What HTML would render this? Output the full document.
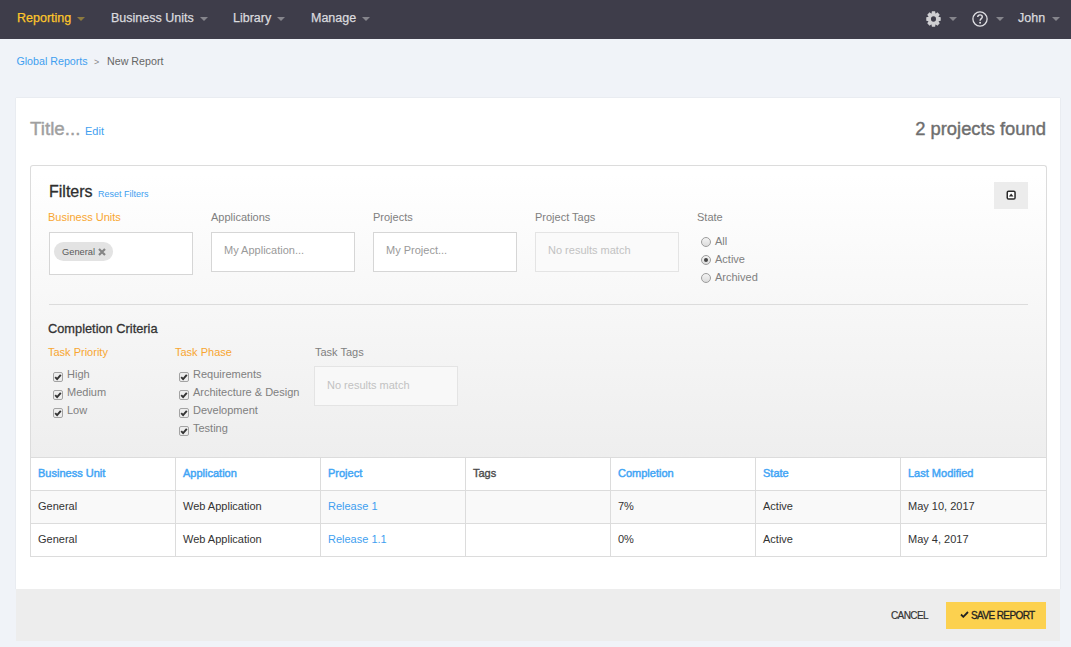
<!DOCTYPE html>
<html><head><meta charset="utf-8">
<style>
*{margin:0;padding:0;box-sizing:border-box}
html,body{width:1071px;height:647px;overflow:hidden;background:#f0f3f8;font-family:"Liberation Sans",sans-serif;position:relative}
.a{position:absolute}
.t{position:absolute;white-space:nowrap;line-height:1}
#nav{left:0;top:0;width:1071px;height:39px;background:#3e3d4a}
.nv{font-size:12.5px;color:#dadade;-webkit-text-stroke:.25px}
.car{position:absolute;width:0;height:0;border-left:4px solid transparent;border-right:4px solid transparent;border-top:4px solid #85858c}
#card{left:16px;top:98px;width:1044px;height:491px;background:#fff;box-shadow:0 0 1px rgba(0,0,0,.18)}
#foot{left:16px;top:589px;width:1044px;height:52px;background:#ededed}
#filt{left:30px;top:165px;width:1017px;height:293px;border:1px solid #dcdcdc;border-bottom:none;border-radius:3px 3px 0 0;background:linear-gradient(#fff 0,#fff 8px,#eeeeee 100%)}
.lbl{font-size:11px;color:#808080}
.org{color:#f8a631}
.m{-webkit-text-stroke:.35px}
.inp{position:absolute;background:#fff;border:1px solid #d6d6d6;width:144px;height:40px}
.ph{font-size:11px;color:#9a9a9a}
.blue{color:#3f9ff0}
.rad{position:absolute;width:10px;height:10px;border-radius:50%;border:1px solid #9d9d9d;background:linear-gradient(#f3f3f3,#dcdcdc)}
.chk{position:absolute;width:10px;height:10px;border-radius:2px;border:1px solid #a0a0a0;background:#f0f0f0}
.chk svg{position:absolute;left:0;top:0}
table{position:absolute;left:30px;top:457px;width:1017px;border-collapse:collapse;table-layout:fixed}
td,th{border:1px solid #dcdcdc;height:33px;font-size:11px;text-align:left;padding:0 7px;color:#333;font-weight:normal;white-space:nowrap}
th{color:#42a5f5;font-weight:normal;-webkit-text-stroke:.45px;padding-bottom:2px}
td{padding-bottom:2px}
tr.s td{background:#f9f9f9}
</style></head><body>
<div id="nav" class="a">
  <div class="t nv" style="left:17px;top:12px;color:#fdc52a">Reporting</div><div class="car" style="left:77px;top:17px;border-top-color:#8c7a3e"></div>
  <div class="t nv" style="left:111px;top:12px">Business Units</div><div class="car" style="left:200px;top:17px"></div>
  <div class="t nv" style="left:233px;top:12px">Library</div><div class="car" style="left:277px;top:17px"></div>
  <div class="t nv" style="left:311px;top:12px">Manage</div><div class="car" style="left:362px;top:17px"></div>
  <svg class="a" style="left:925.5px;top:11px" width="15" height="16" viewBox="0 0 16 16" preserveAspectRatio="none"><path fill="#cfcfd2" d="M5.80 2.85 L6.30 0.29 L9.70 0.29 L10.20 2.85 L10.09 2.80 L12.25 1.34 L14.66 3.75 L13.20 5.91 L13.15 5.80 L15.71 6.30 L15.71 9.70 L13.15 10.20 L13.20 10.09 L14.66 12.25 L12.25 14.66 L10.09 13.20 L10.20 13.15 L9.70 15.71 L6.30 15.71 L5.80 13.15 L5.91 13.20 L3.75 14.66 L1.34 12.25 L2.80 10.09 L2.85 10.20 L0.29 9.70 L0.29 6.30 L2.85 5.80 L2.80 5.91 L1.34 3.75 L3.75 1.34 L5.91 2.80Z"/><circle cx="8" cy="8" r="2.7" fill="#3e3d4a"/></svg>
  <div class="car" style="left:949px;top:17px"></div>
  <svg class="a" style="left:972px;top:11px" width="16" height="16" viewBox="0 0 16 16"><circle cx="8" cy="8" r="7.1" fill="none" stroke="#e0e0e4" stroke-width="1.3"/><path d="M5.7 6.1C5.7 4.7 6.7 3.9 8 3.9C9.3 3.9 10.3 4.8 10.3 6C10.3 7.5 8.1 7.8 8.1 9.7" fill="none" stroke="#e0e0e4" stroke-width="1.4"/><circle cx="8.1" cy="11.8" r=".95" fill="#e0e0e4"/></svg>
  <div class="car" style="left:996px;top:17px"></div>
  <div class="t nv" style="left:1018px;top:12px">John</div><div class="car" style="left:1052px;top:17px"></div>
</div>

<div class="t blue" style="left:16.4px;top:56px;font-size:10.7px">Global Reports</div>
<div class="t" style="left:94px;top:58px;font-size:9px;color:#888">&gt;</div>
<div class="t" style="left:107px;top:56px;font-size:10.7px;color:#666">New Report</div>

<div id="card" class="a"></div>
<div id="foot" class="a"></div>

<div class="t m" style="left:30px;top:119.5px;font-size:18.8px;color:#a0a0a0;-webkit-text-stroke:.4px">Title...</div>
<div class="t blue" style="left:85px;top:126px;font-size:11px">Edit</div>
<div class="t m" style="right:25px;top:119.5px;font-size:18.4px;color:#6e6e6e;-webkit-text-stroke:.4px">2 projects found</div>

<div id="filt" class="a"></div>
<div class="t m" style="left:49px;top:184px;font-size:16px;color:#2e2e2e;-webkit-text-stroke:.3px">Filters</div>
<div class="t blue" style="left:98px;top:190px;font-size:9px">Reset Filters</div>
<div class="a" style="left:994px;top:182px;width:34px;height:27px;background:#ececec"></div>
<svg class="a" style="left:1005.8px;top:189.8px" width="10" height="10" viewBox="0 0 10 10"><rect x="1.25" y="1.25" width="7.8" height="7.8" rx="1.3" fill="#fff" stroke="#2a2a2a" stroke-width="1.5"/><path d="M2.8 6.5L5.15 3.4L7.5 6.5Z" fill="#2a2a2a"/></svg>

<div class="t lbl org" style="left:48px;top:212px">Business Units</div>
<div class="t lbl" style="left:211px;top:212px">Applications</div>
<div class="t lbl" style="left:373px;top:212px">Projects</div>
<div class="t lbl" style="left:535px;top:212px">Project Tags</div>
<div class="t lbl" style="left:697px;top:212px">State</div>

<div class="inp" style="left:49px;top:232px;height:43px"></div>
<div class="a" style="left:54px;top:242px;width:59px;height:19px;border-radius:10px;background:#e3e3e3"></div>
<div class="t" style="left:62px;top:247.6px;font-size:9.3px;color:#5a5a5a">General</div>
<svg class="a" style="left:98px;top:248px" width="8" height="8" viewBox="0 0 8 8"><path d="M1 1L7 7M7 1L1 7" stroke="#858585" stroke-width="2.2"/></svg>

<div class="inp" style="left:211px;top:232px"></div>
<div class="t ph" style="left:224px;top:245px">My Application...</div>
<div class="inp" style="left:373px;top:232px"></div>
<div class="t ph" style="left:386px;top:245px">My Project...</div>
<div class="inp" style="left:535px;top:232px;background:#fafafa;border-color:#e4e4e4"></div>
<div class="t ph" style="left:548px;top:245px;color:#c2c2c2">No results match</div>

<div class="rad" style="left:701px;top:237px"></div>
<div class="t lbl" style="left:715px;top:236px">All</div>
<div class="rad" style="left:701px;top:255px"></div>
<div class="a" style="left:704px;top:258px;width:4px;height:4px;border-radius:50%;background:#444"></div>
<div class="t lbl" style="left:715px;top:254px">Active</div>
<div class="rad" style="left:701px;top:273px"></div>
<div class="t lbl" style="left:715px;top:272px">Archived</div>

<div class="a" style="left:49px;top:304px;width:979px;height:1px;background:#dcdcdc"></div>

<div class="t" style="left:48px;top:323px;font-size:12.8px;color:#333;-webkit-text-stroke:.3px">Completion Criteria</div>
<div class="t lbl org" style="left:48px;top:347px">Task Priority</div>
<div class="t lbl org" style="left:175px;top:347px">Task Phase</div>
<div class="t lbl" style="left:315px;top:347px">Task Tags</div>

<svg class="a" style="left:53px;top:372px" width="10" height="10" viewBox="0 0 10 10"><rect x=".5" y=".5" width="9" height="9" rx="1.5" fill="#ededed" stroke="#a3a3a3"/><path d="M2.2 5.2L4.1 7.2L7.8 2.8" fill="none" stroke="#333" stroke-width="1.9"/></svg><svg class="a" style="left:53px;top:390px" width="10" height="10" viewBox="0 0 10 10"><rect x=".5" y=".5" width="9" height="9" rx="1.5" fill="#ededed" stroke="#a3a3a3"/><path d="M2.2 5.2L4.1 7.2L7.8 2.8" fill="none" stroke="#333" stroke-width="1.9"/></svg><svg class="a" style="left:53px;top:408px" width="10" height="10" viewBox="0 0 10 10"><rect x=".5" y=".5" width="9" height="9" rx="1.5" fill="#ededed" stroke="#a3a3a3"/><path d="M2.2 5.2L4.1 7.2L7.8 2.8" fill="none" stroke="#333" stroke-width="1.9"/></svg><svg class="a" style="left:179px;top:372px" width="10" height="10" viewBox="0 0 10 10"><rect x=".5" y=".5" width="9" height="9" rx="1.5" fill="#ededed" stroke="#a3a3a3"/><path d="M2.2 5.2L4.1 7.2L7.8 2.8" fill="none" stroke="#333" stroke-width="1.9"/></svg><svg class="a" style="left:179px;top:390px" width="10" height="10" viewBox="0 0 10 10"><rect x=".5" y=".5" width="9" height="9" rx="1.5" fill="#ededed" stroke="#a3a3a3"/><path d="M2.2 5.2L4.1 7.2L7.8 2.8" fill="none" stroke="#333" stroke-width="1.9"/></svg><svg class="a" style="left:179px;top:408px" width="10" height="10" viewBox="0 0 10 10"><rect x=".5" y=".5" width="9" height="9" rx="1.5" fill="#ededed" stroke="#a3a3a3"/><path d="M2.2 5.2L4.1 7.2L7.8 2.8" fill="none" stroke="#333" stroke-width="1.9"/></svg><svg class="a" style="left:179px;top:426px" width="10" height="10" viewBox="0 0 10 10"><rect x=".5" y=".5" width="9" height="9" rx="1.5" fill="#ededed" stroke="#a3a3a3"/><path d="M2.2 5.2L4.1 7.2L7.8 2.8" fill="none" stroke="#333" stroke-width="1.9"/></svg>
<div class="t lbl" style="left:67px;top:369px">High</div>
<div class="t lbl" style="left:67px;top:387px">Medium</div>
<div class="t lbl" style="left:67px;top:405px">Low</div>
<div class="t lbl" style="left:193px;top:369px">Requirements</div>
<div class="t lbl" style="left:193px;top:387px">Architecture &amp; Design</div>
<div class="t lbl" style="left:193px;top:405px">Development</div>
<div class="t lbl" style="left:193px;top:423px">Testing</div>

<div class="inp" style="left:314px;top:366px;height:40px;background:#f8f8f8;border-color:#e4e4e4"></div>
<div class="t ph" style="left:327px;top:380px;color:#c2c2c2">No results match</div>

<table>
<colgroup><col style="width:145px"><col style="width:145px"><col style="width:145px"><col style="width:145px"><col style="width:145px"><col style="width:145px"><col style="width:146px"></colgroup>
<tr><th>Business Unit</th><th>Application</th><th>Project</th><th style="color:#4a4a4a;-webkit-text-stroke:.35px">Tags</th><th>Completion</th><th>State</th><th>Last Modified</th></tr>
<tr class="s"><td>General</td><td>Web Application</td><td class="blue">Release 1</td><td></td><td>7%</td><td>Active</td><td>May 10, 2017</td></tr>
<tr><td>General</td><td>Web Application</td><td class="blue">Release 1.1</td><td></td><td>0%</td><td>Active</td><td>May 4, 2017</td></tr>
</table>

<div class="t" style="left:891px;top:611px;font-size:10px;letter-spacing:-.6px;color:#333;-webkit-text-stroke:.2px">CANCEL</div>
<div class="a" style="left:946px;top:602px;width:100px;height:27px;background:#fcd14f"></div>
<svg class="a" style="left:960px;top:611px" width="9" height="7" viewBox="0 0 9 7"><path d="M1 3.5L3.3 5.8L8 1" fill="none" stroke="#222" stroke-width="1.8"/></svg>
<div class="t" style="left:971px;top:611px;font-size:10px;letter-spacing:-.6px;color:#222;-webkit-text-stroke:.3px">SAVE REPORT</div>
</body></html>
